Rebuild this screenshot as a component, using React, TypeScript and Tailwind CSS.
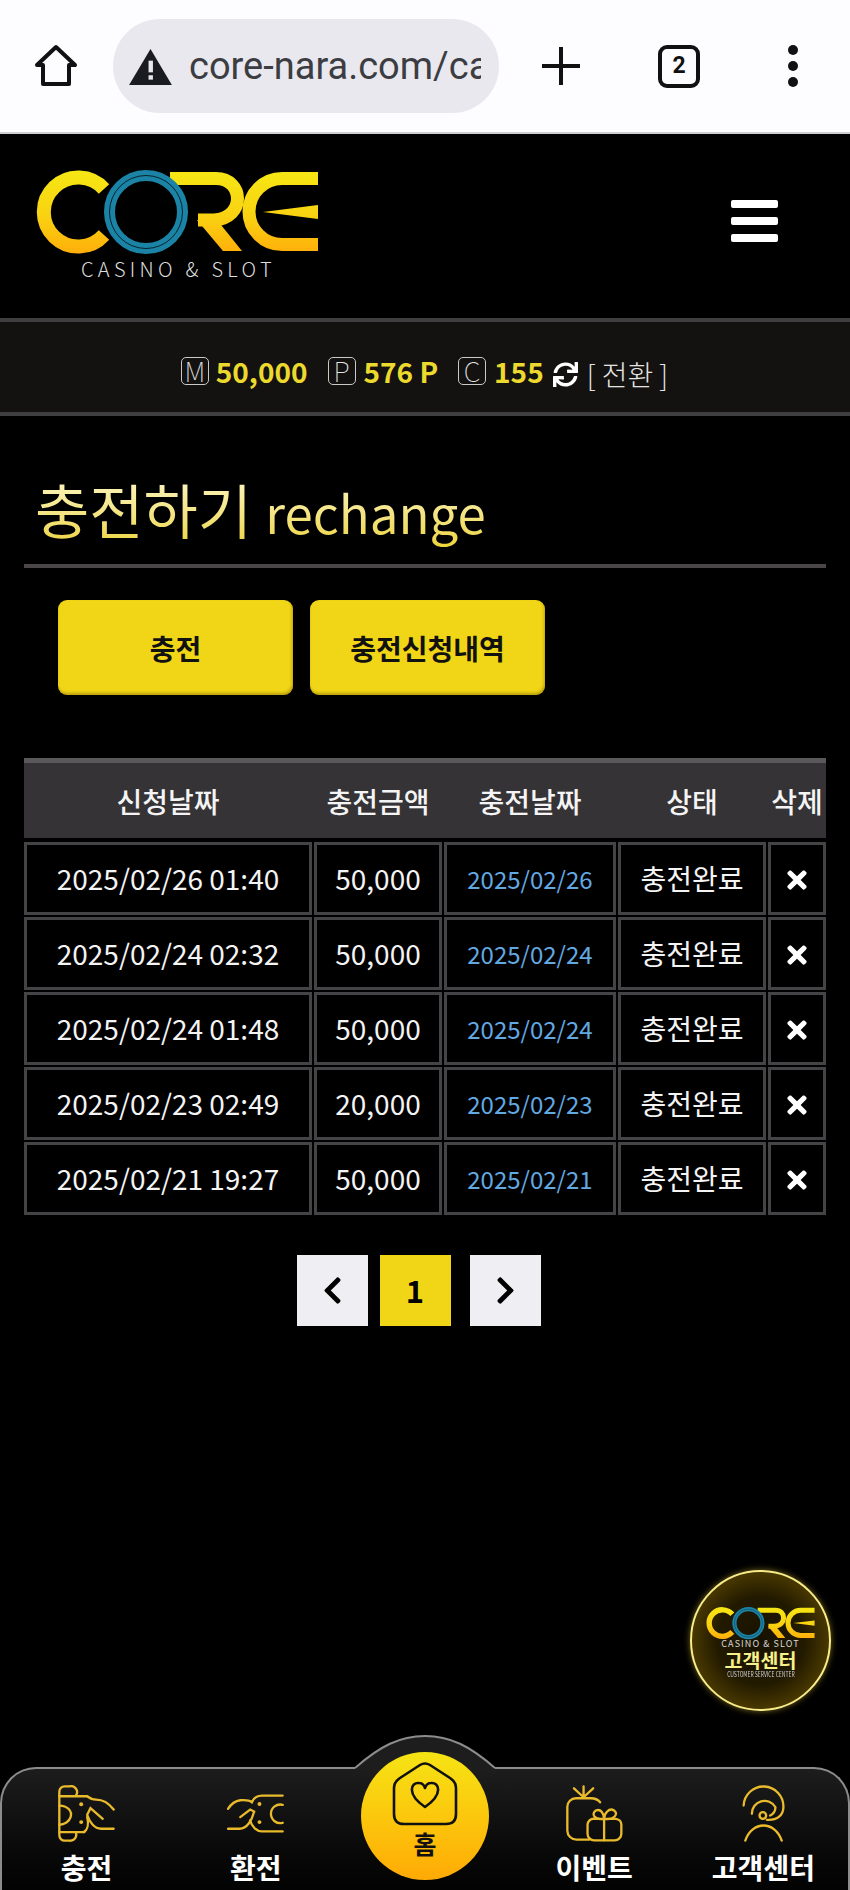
import React from 'react';
import { FaSync, FaTimes, FaChevronLeft, FaChevronRight } from 'react-icons/fa';

const rows = [
  { at: '2025/02/26 01:40', amount: '50,000', date: '2025/02/26' },
  { at: '2025/02/24 02:32', amount: '50,000', date: '2025/02/24' },
  { at: '2025/02/24 01:48', amount: '50,000', date: '2025/02/24' },
  { at: '2025/02/23 02:49', amount: '20,000', date: '2025/02/23' },
  { at: '2025/02/21 19:27', amount: '50,000', date: '2025/02/21' },
];

const columns = 'grid grid-cols-[288px_128px_172px_148px_1fr] gap-x-[2px]';

// Core logo, drawn on a 320x108 box
const CoreLogo = ({ id, className }: { id: string; className: string }) => (
  <svg viewBox="0 0 320 108" className={className}>
    <defs>
      <linearGradient id={id} gradientUnits="userSpaceOnUse" x1="0" y1="20" x2="0" y2="104">
        <stop offset="0" stopColor="#f6e714" />
        <stop offset="0.55" stopColor="#f9d212" />
        <stop offset="1" stopColor="#ffae0a" />
      </linearGradient>
    </defs>
    <g fill="none" stroke={`url(#${id})`} strokeWidth="14">
      <path d="M84 39 A34.5 34.5 0 1 0 84 85" />
      <path d="M150 28.5 H196 C224 28.5 226 68 194 70 H178" strokeWidth="13" />
      <path d="M298 28.5 H262 A33 33 0 0 0 262 94.5 H298" strokeWidth="13" />
    </g>
    <path d="M177 70 H197 L222 101 H203 Z" fill={`url(#${id})`} />
    <path d="M243 62 L298 55 V69 Z" fill={`url(#${id})`} />
    <circle cx="126" cy="62" r="36.5" fill="none" stroke="#1b84a6" strokeWidth="11" />
    <circle cx="126" cy="62" r="36.5" fill="none" stroke="#06222c" strokeWidth="1" />
  </svg>
);

const BrowserBar = () => (
  <div className="flex h-[134px] items-center border-b-2 border-[#cfcfd2] bg-[#fdfdff] font-['Roboto',sans-serif]">
    <svg viewBox="0 0 44 44" className="ml-[34px] h-[44px] w-[44px]" fill="none" stroke="#111" strokeWidth="4" strokeLinejoin="round">
      <path d="M22 3 L41 21 H35 V40 H9 V21 H3 Z" />
    </svg>
    <div className="ml-[35px] flex h-[94px] w-[386px] items-center overflow-hidden rounded-full bg-[#e8e8ee] pl-[16px]">
      <svg viewBox="0 0 44 38" className="h-[37px] w-[43px] shrink-0">
        <path d="M22 1 L44 38 H0 Z" fill="#1b1c22" />
        <rect x="20" y="13" width="4.5" height="12" fill="#e8e8ee" />
        <rect x="20" y="28" width="4.5" height="4.5" fill="#e8e8ee" />
      </svg>
      <div className="ml-[17px] w-[292px] overflow-hidden text-[38px] whitespace-nowrap text-[#3c3d42]">core-nara.com/ca</div>
    </div>
    <svg viewBox="0 0 38 38" className="ml-[43px] h-[38px] w-[38px]" stroke="#111" strokeWidth="4">
      <path d="M19 0 V38 M0 19 H38" />
    </svg>
    <div className="ml-[78px] flex h-[43px] w-[42px] items-center justify-center rounded-[9px] border-[4px] border-[#111] text-[23px] font-bold text-[#111]">2</div>
    <div className="ml-[88px] flex flex-col gap-[6px]">
      <span className="h-[10px] w-[10px] rounded-full bg-[#111]" />
      <span className="h-[10px] w-[10px] rounded-full bg-[#111]" />
      <span className="h-[10px] w-[10px] rounded-full bg-[#111]" />
    </div>
  </div>
);

const Header = () => (
  <div className="flex h-[184px] items-start justify-between bg-black pr-[72px] pl-[20px]">
    <div className="mt-[16px] flex flex-col">
      <CoreLogo id="logoMain" className="h-[108px] w-[320px]" />
      <div className="-mt-[1px] ml-[61px] text-[20px] leading-[24px] font-light tracking-[0.215em] whitespace-nowrap text-[#dedede]">CASINO &amp; SLOT</div>
    </div>
    <div className="mt-[66px] flex w-[47px] flex-col gap-[9px]">
      <span className="h-[8px] rounded-[2px] bg-white" />
      <span className="h-[8px] rounded-[2px] bg-white" />
      <span className="h-[8px] rounded-[2px] bg-white" />
    </div>
  </div>
);

const Mark = ({ letter }: { letter: string }) => (
  <span className="flex h-[28px] w-[28px] items-center justify-center rounded-[5px] border border-[#c9c9c9] text-[27px] leading-none font-thin text-[#e4e4e4]">{letter}</span>
);

const BalanceBar = () => (
  <div className="flex h-[98px] items-center justify-center border-y-[4px] border-[#3f3e40] bg-[#131210] pt-[7px] pr-[1px]">
    <Mark letter="M" />
    <span className="ml-[7px] text-[28px] leading-none font-bold text-[#ecd92e]">50,000</span>
    <span className="ml-[20px]"><Mark letter="P" /></span>
    <span className="ml-[8px] text-[28px] leading-none font-bold text-[#ecd92e]">576 P</span>
    <span className="ml-[20px]"><Mark letter="C" /></span>
    <span className="ml-[8px] text-[28px] leading-none font-bold text-[#ecd92e]">155</span>
    <FaSync className="mt-[8px] ml-[9px] h-[25px] w-[25px] text-white" />
    <span className="mt-[6px] ml-[9px] text-[28px] leading-none font-light whitespace-nowrap text-[#e4e4e4]">[ 전환 ]</span>
  </div>
);

const Pagination = () => (
  <div className="mt-[40px] flex justify-center gap-x-[12px] pr-[13px]">
    <span className="flex h-[71px] w-[71px] items-center justify-center bg-[#efeef2] text-black"><FaChevronLeft className="h-[31px] w-[31px]" /></span>
    <span className="mr-[7px] flex h-[71px] w-[71px] items-center justify-center bg-[#f0d616] text-[31px] font-bold text-black">1</span>
    <span className="flex h-[71px] w-[71px] items-center justify-center bg-[#efeef2] text-black"><FaChevronRight className="h-[31px] w-[31px]" /></span>
  </div>
);

const HistoryTable = () => (
  <div className="mt-[63px]">
    <div className={`${columns} h-[80px] items-center border-t-[5px] border-[#5a585a] bg-[#353336] text-[28px] font-medium text-[#f4f4f4]`}>
      <span className="text-center">신청날짜</span>
      <span className="text-center">충전금액</span>
      <span className="text-center">충전날짜</span>
      <span className="text-center">상태</span>
      <span className="text-center">삭제</span>
    </div>
    <div className="mt-[4px] flex flex-col gap-y-[2px]">
      {rows.map((row) => (
        <div key={row.at} className={`${columns} h-[73px] text-[28px] text-[#f4f4f4]`}>
          <span className="flex items-center justify-center border-[3px] border-[#444346] pb-[2px]">{row.at}</span>
          <span className="flex items-center justify-center border-[3px] border-[#444346] pb-[2px]">{row.amount}</span>
          <span className="flex items-center justify-center border-[3px] border-[#444346] text-[24px] text-[#62a9e2]">{row.date}</span>
          <span className="flex items-center justify-center border-[3px] border-[#444346] pb-[2px]">충전완료</span>
          <span className="flex items-center justify-center border-[3px] border-[#444346] pt-[3px]"><FaTimes className="h-[28px] w-[28px] text-white" /></span>
        </div>
      ))}
    </div>
  </div>
);

const ChargeIcon = () => (
  <svg viewBox="170 248 172 172" className="h-[57px] w-[57px]" fill="none" stroke="#e9bb2c" strokeWidth="7" strokeLinecap="round">
    <path d="M174 282 H258 M174 390 H250" />
    <path d="M174 282 V268 A16 16 0 0 1 190 252 H205 A18 18 0 0 1 224 280" />
    <path d="M174 282 V400 A16 16 0 0 0 190 416 H205 A18 18 0 0 0 224 392" />
    <path d="M174 310 C198 310 214 326 208 345 C204 358 190 368 174 368" />
    <path d="M258 282 C268 290 272 292 285 292 C305 292 325 305 338 322" />
    <path d="M338 380 H300 C280 380 265 360 258 338 L268 318 L305 350" />
    <path d="M258 345 C264 368 258 384 248 390" />
    <circle cx="240" cy="306" r="6" fill="#e9bb2c" stroke="none" />
    <circle cx="240" cy="360" r="6" fill="#e9bb2c" stroke="none" />
  </svg>
);

const ExchangeIcon = () => (
  <svg viewBox="680 248 172 172" className="h-[57px] w-[57px]" fill="none" stroke="#e9bb2c" strokeWidth="7" strokeLinecap="round">
    <path d="M848 280 H785 C770 280 760 288 755 300 C745 292 735 294 720 294 C705 296 692 306 683 320" />
    <path d="M683 380 H718 C740 380 755 355 762 328 L750 322 L720 345" />
    <path d="M848 388 H785 C770 388 755 375 750 355" />
    <path d="M848 308 A28 28 0 1 0 848 362" />
    <circle cx="778" cy="305" r="6" fill="#e9bb2c" stroke="none" />
    <circle cx="778" cy="360" r="6" fill="#e9bb2c" stroke="none" />
  </svg>
);

const EventIcon = () => (
  <svg viewBox="425 248 172 172" className="h-[57px] w-[57px]" fill="none" stroke="#e9bb2c" strokeWidth="7" strokeLinecap="round">
    <path d="M528 300 C520 290 510 288 500 288 H455 A26 26 0 0 0 429 314 V385 A28 28 0 0 0 457 413 H495" />
    <path d="M478 285 V252 M478 285 L449 258 M478 285 L507 258" />
    <path d="M510 350 H575 A18 18 0 0 1 592 368 V395 A20 20 0 0 1 572 415 H510 A20 20 0 0 1 490 395 V368 A18 18 0 0 1 510 350" />
    <path d="M540 350 V415" />
    <path d="M540 350 C510 355 500 335 515 325 C530 318 540 335 540 350 C540 335 555 315 570 325 C585 335 570 355 540 350" />
  </svg>
);

const SupportIcon = () => (
  <svg viewBox="934 248 172 172" className="h-[57px] w-[57px]" fill="none" stroke="#e9bb2c" strokeWidth="7" strokeLinecap="round">
    <path d="M960 310 A60 60 0 0 1 1080 315 C1080 340 1060 355 1030 353" />
    <path d="M985 335 A38 38 0 0 1 1056 315 C1056 328 1048 336 1040 340" />
    <circle cx="1018" cy="340" r="10" />
    <path d="M965 416 C985 355 1055 355 1075 416" />
  </svg>
);

const NavItem = ({ icon, label }: { icon: React.ReactNode; label: string }) => (
  <div className="flex flex-col items-center pt-[16px]">
    {icon}
    <span className="mt-[7px] text-[28px] leading-[36px] font-bold whitespace-nowrap text-white">{label}</span>
  </div>
);

const BottomNav = () => (
  <div className="relative mt-auto h-[123px] rounded-t-[36px] border-x-2 border-t-2 border-[#8c8c8c] bg-gradient-to-b from-[#1d1d1d] to-[#030303]">
    {/* hump behind the home button */}
    <svg viewBox="0 0 140 38" className="absolute -top-[35px] left-[353px] h-[38px] w-[140px]">
      <path d="M0 34 C25 12 45 2 70 2 C95 2 115 12 140 34 V38 H0 Z" fill="#1d1d1d" />
      <path d="M0 34 C25 12 45 2 70 2 C95 2 115 12 140 34" fill="none" stroke="#8c8c8c" strokeWidth="2" />
    </svg>
    <div className="grid grid-cols-5">
      <NavItem icon={<ChargeIcon />} label="충전" />
      <NavItem icon={<ExchangeIcon />} label="환전" />
      <div />
      <NavItem icon={<EventIcon />} label="이벤트" />
      <NavItem icon={<SupportIcon />} label="고객센터" />
    </div>
    <div className="absolute -top-[17px] left-[359px] flex h-[128px] w-[128px] flex-col items-center rounded-full bg-gradient-to-b from-[#f5e414] to-[#ffaa05]">
      <svg viewBox="0 0 66 66" className="mt-[8px] h-[66px] w-[66px]" fill="none" stroke="#111" strokeWidth="2.6" strokeLinejoin="round">
        <path d="M28 5 Q33 2 38 5 L58 18 Q64 22 64 28 V54 Q64 64 54 64 H12 Q2 64 2 54 V28 Q2 22 8 18 Z" />
        <path d="M33 47 C14 34 19 22 27 23 C30 23 32 25 33 28 C34 25 36 23 39 23 C47 22 52 34 33 47 Z" />
      </svg>
      <span className="mt-[1px] text-[25px] leading-[32px] font-bold text-[#111]">홈</span>
    </div>
  </div>
);

const SupportBadge = () => (
  <div className="absolute top-[1570px] left-[690px] flex h-[141px] w-[141px] flex-col items-center rounded-full border-2 border-[#f8ec8a] bg-[radial-gradient(circle,#171100_0%,#221a00_45%,#4a3900_72%,#c9a515_100%)] shadow-[0_0_6px_rgba(240,210,60,0.5)]">
    <CoreLogo id="logoBadge" className="mt-[27px] ml-[2px] h-[42px] w-[123px] shrink-0" />
    <span className="-mt-[3px] text-[9px] leading-[11px] tracking-[0.12em] whitespace-nowrap text-[#d8d8d8]">CASINO &amp; SLOT</span>
    <span className="mt-[1px] text-[19.5px] leading-[20px] font-bold whitespace-nowrap text-[#f8f08a]">고객센터</span>
    <span className="scale-x-[0.72] text-[7px] leading-[8px] whitespace-nowrap text-[#cfcfcf]">CUSTOMER SERVICE CENTER</span>
  </div>
);

export default function App() {
  return (
    <div className="relative flex h-[1890px] w-[850px] flex-col overflow-hidden bg-black font-['Noto_Sans_CJK_KR',sans-serif]">
      <BrowserBar />
      <Header />
      <BalanceBar />
      <main className="px-[24px]">
        <div className="flex h-[152px] items-end border-b-[4px] border-[#4a4648] pb-[14px] pl-[11px]">
          <h1 className="bg-gradient-to-b from-[#fff8c8] to-[#ecd32c] bg-clip-text text-[59px] leading-[76px] font-normal whitespace-nowrap text-transparent">
            충전하기 <span className="text-[51px]">rechange</span>
          </h1>
        </div>
        <div className="mt-[32px] ml-[34px] flex gap-x-[17px]">
          <button className="h-[95px] w-[235px] rounded-[9px] bg-[#f0d616] text-[28px] font-bold text-[#111] shadow-[inset_-1px_-2px_3px_rgba(120,90,0,0.45)]">충전</button>
          <button className="h-[95px] w-[235px] rounded-[9px] bg-[#f0d616] text-[28px] font-bold text-[#111] shadow-[inset_-1px_-2px_3px_rgba(120,90,0,0.45)]">충전신청내역</button>
        </div>
        <HistoryTable />
        <Pagination />
      </main>
      <SupportBadge />
      <BottomNav />
    </div>
  );
}
